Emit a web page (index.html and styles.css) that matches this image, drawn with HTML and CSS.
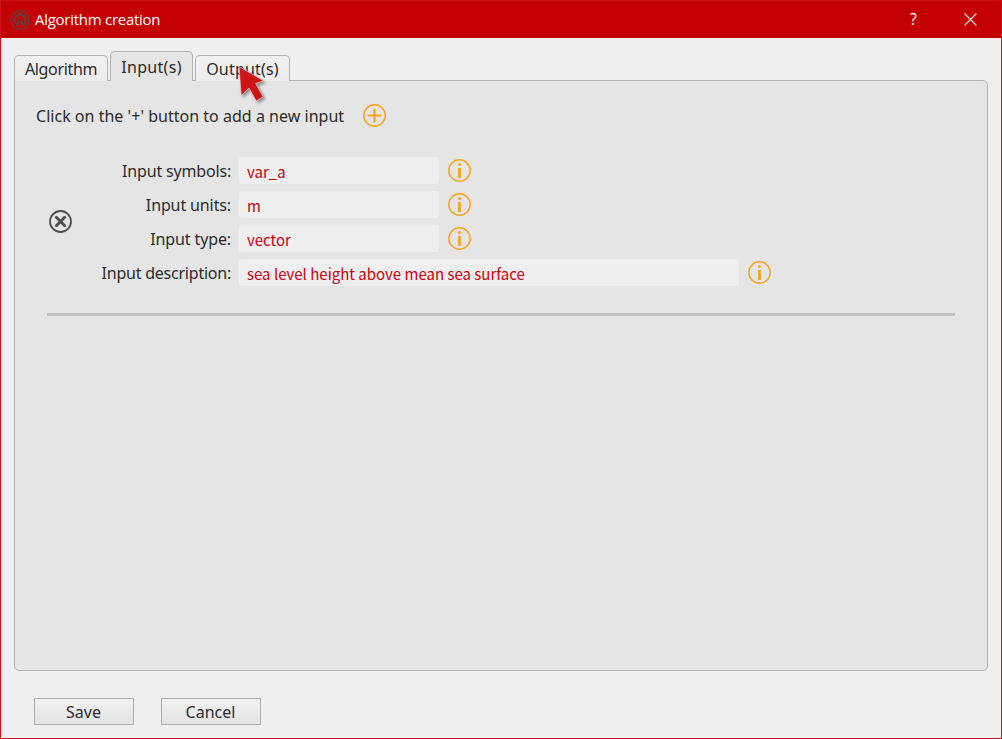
FILE: index.html
```html
<!DOCTYPE html>
<html lang="en">
<head>
<meta charset="utf-8">
<title>Algorithm creation</title>
<link rel="stylesheet" href="styles.css">
</head>
<body>
<svg class="defs" width="0" height="0">
  <symbol id="info" viewBox="0 0 23 23"><circle cx="11.5" cy="11.5" r="10.7" fill="none" stroke="#f7a51e" stroke-width="1.5"/><circle cx="11.5" cy="5.5" r="1.6" fill="#f7a51e"/><path d="M11.5 9v10" stroke="#f7a51e" stroke-width="2.8"/></symbol>
</svg>
<div class="window">
  <header class="titlebar">
    <svg class="logo" viewBox="0 0 20 20" fill="none" stroke="#674141"><circle cx="10" cy="10" r="9.2" stroke-width="1.3"/><path d="M6.3 13.6A5.2 5.2 0 1 1 14 13.4" stroke-width="1.9"/><path d="M4.9 10H3.1M6.2 6.2L5 5M10 4.8V3M13.8 6.2L15 5M15.1 10h1.8M14 13.4l1.4 1.4" stroke-width="2"/><path d="M6.2 16l3.4-4.8M11.2 12.2l2.4 3.8" stroke-width="1.9"/><path d="M9.2 8.2a2 2 0 1 0 2.8 2.2" stroke-width="1.5"/></svg>
    <span class="title">Algorithm creation</span>
    <span class="help">?</span>
    <svg class="close" viewBox="0 0 13 13"><path d="M.6.6l11.8 11.8M12.4.6L.6 12.4" stroke="#fff" stroke-width="1.2"/></svg>
  </header>
  <nav class="tabs">
    <div class="tab tab-algorithm">Algorithm</div>
    <div class="tab active">Input(s)</div>
    <div class="tab tab-output">Output(s)</div>
  </nav>
  <main class="panel">
    <div class="add-row">
      <span class="hint">Click on the '+' button to add a new input</span>
      <svg class="icon" viewBox="0 0 23 23" fill="none" stroke="#f7a51e"><circle cx="11.5" cy="11.5" r="10.7" stroke-width="1.5"/><path d="M11.5 4.5v14M4.5 11.5h14" stroke-width="2.2"/></svg>
    </div>
    <section class="entry">
      <svg class="icon remove" viewBox="0 0 23 23" fill="none" stroke="#4d4d4d"><circle cx="11.5" cy="11.5" r="10.5" stroke-width="1.8"/><path d="M7.3 7.3l8.4 8.4M15.7 7.3l-8.4 8.4" stroke-width="2.8" stroke-linecap="round"/></svg>
      <div class="fields">
        <div class="row"><span class="label l-symbols">Input symbols:</span><span class="field">var_a</span><svg class="icon"><use href="#info"/></svg></div>
        <div class="row"><span class="label">Input units:</span><span class="field">m</span><svg class="icon"><use href="#info"/></svg></div>
        <div class="row"><span class="label">Input type:</span><span class="field">vector</span><svg class="icon"><use href="#info"/></svg></div>
        <div class="row"><span class="label l-desc">Input description:</span><span class="field wide">sea level height above mean sea surface</span><svg class="icon"><use href="#info"/></svg></div>
      </div>
    </section>
    <div class="rule"></div>
  </main>
  <footer class="actions">
    <div class="button">Save</div>
    <div class="button">Cancel</div>
  </footer>
</div>
<svg class="pointer" viewBox="0 0 36 44"><path d="M4 1.5L28.6 15.8 20.6 18.5 28.2 31.8 21.3 36 14 23 6.2 30.4Z" fill="#cf1418" stroke="#f1dede" stroke-width=".6"/></svg>
</body>
</html>
```
FILE: styles.css
```css
* { box-sizing: border-box; }
body {
  margin: 0;
  font: 16px/22px "Noto Sans", sans-serif;
  color: #2b2b2b;
}
.defs { position: absolute; }
.window {
  height: 739px;
  border: 1px solid #c8141a;
  background: #efefef;
}
.titlebar {
  display: flex;
  align-items: center;
  height: 37px;
  padding-left: 9px;
  background: #c30003;
  color: #fff;
}
.logo { width: 20px; height: 20px; }
.title {
  width: 870px;
  padding: 0 0 2px 5px;
  font: 15px/20px "Open Sans", sans-serif;
  letter-spacing: -0.27px;
}
.help {
  width: 64px;
  padding: 0 0 2px 10px;
  font: 16px/20px "Open Sans", sans-serif;
}
.close { width: 13px; height: 13px; }
.tabs {
  display: flex;
  align-items: flex-end;
  gap: 2px;
  height: 43px;
  padding-left: 13px;
}
.tab {
  display: flex;
  justify-content: center;
  align-items: center;
  height: 26px;
  border: 1px solid #b3b3b3;
  border-bottom: 0;
  border-radius: 5px 5px 0 0;
  background: linear-gradient(#f1f1f1, #ececec);
  white-space: nowrap;
}
.tab-algorithm { width: 94px; letter-spacing: -0.35px; }
.tab-output { width: 95px; letter-spacing: 0.2px; }
.tab.active {
  z-index: 1;
  width: 83px;
  height: 30px;
  background: #e5e5e5;
  box-shadow: 0 1px #e5e5e5;
  letter-spacing: 0.3px;
}
.panel {
  width: 974px;
  height: 591px;
  margin-left: 13px;
  margin-top: -1px;
  padding: 23px 0 0 21px;
  border: 1px solid #b3b3b3;
  border-radius: 0 5px 5px 5px;
  background: #e5e5e5;
}
.icon { flex: none; width: 23px; height: 23px; }
.add-row { display: flex; align-items: center; height: 23px; }
.hint { width: 327px; letter-spacing: 0.02px; white-space: nowrap; }
.entry { display: flex; align-items: center; margin-top: 30px; padding-left: 13px; }
.fields { display: flex; flex-direction: column; gap: 7px; }
.row { display: flex; align-items: center; height: 27px; }
.label { width: 159px; text-align: right; letter-spacing: -0.12px; white-space: nowrap; }
.l-symbols { letter-spacing: -0.17px; }
.l-desc { letter-spacing: -0.23px; }
.field {
  width: 200px;
  height: 27px;
  margin: 0 9px 0 8px;
  padding: 3px 7px 0 8px;
  border-radius: 3px;
  background: #efefef;
  color: #c9000c;
  font: 15px/24px "Noto Sans CJK SC", sans-serif;
  white-space: nowrap;
}
.wide { width: 500px; }
.rule { width: 908px; height: 3px; margin: 27px 0 0 11px; background: #bfbfbf; }
.actions { display: flex; gap: 27px; padding: 27px 0 0 33px; }
.button {
  width: 100px;
  height: 27px;
  padding-right: 1px;
  border: 1px solid #adadad;
  background: linear-gradient(#f1f1f1, #e3e3e3);
  line-height: 27px;
  text-align: center;
}
.pointer {
  position: absolute;
  left: 235px;
  top: 65px;
  width: 36px;
  height: 44px;
  filter: drop-shadow(2px 2px 1.5px rgba(0, 0, 0, .4));
}
```
